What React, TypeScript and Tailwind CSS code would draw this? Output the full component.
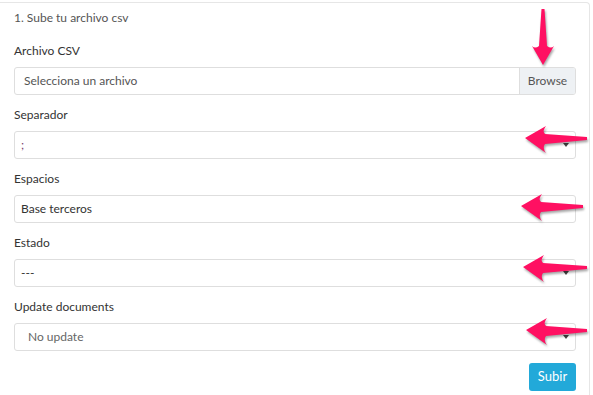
import React from 'react';

const LeftArrow: React.FC<{ tipX: number; y: number; len: number }> = ({ tipX, y, len }) => (
  <svg
    className="absolute pointer-events-none drop-shadow-[1px_2px_1px_rgba(0,0,0,0.35)]"
    style={{ left: tipX, top: y - 14 }}
    width={len + 4}
    height={30}
    viewBox={`0 0 ${len + 4} 30`}
  >
    <path
      d={`M0,13 L21,1 Q17,6 20,9 L${len},12 L${len},15 L20,19 Q17,23 21,28 Z`}
      fill="#ff1062"
    />
  </svg>
);

const DownArrow: React.FC<{ x: number; top: number; len: number }> = ({ x, top, len }) => (
  <svg
    className="absolute pointer-events-none drop-shadow-[1px_2px_1px_rgba(0,0,0,0.35)]"
    style={{ left: x - 13, top }}
    width={28}
    height={len + 4}
    viewBox={`0 0 28 ${len + 4}`}
  >
    <path
      d={`M11.5,0 L14.5,0 L17,${len - 19} Q21,${len - 16} 24,${len - 19} L13,${len} L2,${len - 19} Q5,${len - 16} 9,${len - 19} Z`}
      fill="#ff1062"
    />
  </svg>
);

const Caret = () => (
  <span className="absolute right-[6px] top-1/2 -translate-y-1/2 w-0 h-0 border-l-[3px] border-r-[3px] border-t-[4px] border-l-transparent border-r-transparent border-t-[#444]" />
);

const Field: React.FC<{ label: string; children: React.ReactNode }> = ({ label, children }) => (
  <div className="flex flex-col mb-3">
    <label className="h-4 leading-4 mb-2 text-[12px] text-[#333]">{label}</label>
    {children}
  </div>
);

const Select: React.FC<{ value: string; indent?: boolean; color?: string }> = ({ value, indent, color }) => (
  <div className="relative h-7 border border-[#dedede] rounded-[3px] bg-white flex items-center">
    <span className={`${indent ? 'pl-[13px]' : 'pl-[6px]'} text-[12px] ${color ?? 'text-[#333]'}`}>{value}</span>
    <Caret />
  </div>
);

export default function App() {
  return (
    <div className="w-[593px] h-[395px] bg-white relative overflow-hidden font-['Lato','Open_Sans',sans-serif]">
      <div className="mt-[2px] w-[590px] h-[400px] border-t border-r border-[#e6e6e6] rounded-tr-[4px] pl-[14px] pr-[13px] pt-[7px]">
        <div className="h-4 leading-4 text-[12px] text-[#555] mb-[17px]">1. Sube tu archivo csv</div>

        <Field label="Archivo CSV">
          <div className="h-7 border border-[#dedede] rounded-[3px] flex items-stretch overflow-hidden">
            <div className="flex-1 flex items-center pl-[9px] text-[12px] text-[#555]">Selecciona un archivo</div>
            <div className="w-[56px] bg-[#eef1f4] border-l border-[#dedede] flex items-center justify-center text-[12px] text-[#555]">
              Browse
            </div>
          </div>
        </Field>

        <Field label="Separador">
          <Select value=";" color="text-[#7a3b6a]" />
        </Field>

        <Field label="Espacios">
          <div className="h-7 border border-[#dedede] rounded-[3px] flex items-center pl-[6px] text-[12px] text-[#333]">
            Base terceros
          </div>
        </Field>

        <Field label="Estado">
          <Select value="---" />
        </Field>

        <Field label="Update documents">
          <Select value="No update" indent color="text-[#666]" />
        </Field>

        <div className="flex justify-end mt-[1px]">
          <button className="w-[47px] h-7 rounded-[3px] bg-[#22a9d9] text-white text-[13px]">Subir</button>
        </div>
      </div>

      <DownArrow x={543} top={9} len={56} />
      <LeftArrow tipX={525} y={139} len={62} />
      <LeftArrow tipX={521} y={207} len={62} />
      <LeftArrow tipX={523} y={268} len={64} />
      <LeftArrow tipX={526} y={331} len={61} />
    </div>
  );
}
